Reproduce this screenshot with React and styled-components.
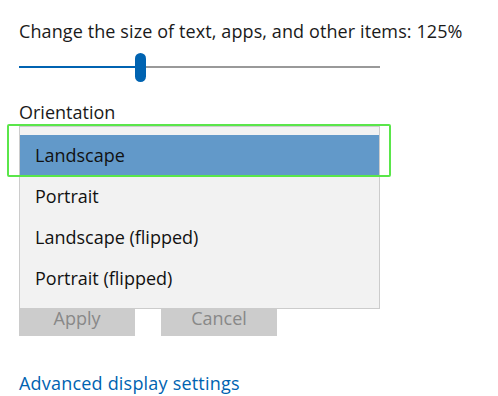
import React from "react";
import styled, { createGlobalStyle } from "styled-components";

const Global = createGlobalStyle`
  html, body { margin: 0; padding: 0; background: #ffffff; }
  body { font-family: "Open Sans", "Noto Sans", sans-serif; color: #1a1a1a; }
`;

const Page = styled.div`
  position: relative;
  width: 498px;
  height: 396px;
  padding-left: 19px;
  box-sizing: border-box;
  overflow: hidden;
`;

const Title = styled.div`
  margin-top: 19px;
  font-size: 18px;
  line-height: 24px;
  letter-spacing: 0.1px;
  color: #1a1a1a;
  white-space: nowrap;
`;

const Slider = styled.div`
  margin-top: 9px;
  width: 361px;
  height: 30px;
  display: flex;
  align-items: center;
`;

const Track = styled.div`
  height: 2px;
  background: ${(p) => (p.$filled ? "#0063b1" : "#999999")};
  flex: ${(p) => (p.$filled ? "0 0 auto" : "1 1 auto")};
`;

const Thumb = styled.div`
  flex: 0 0 auto;
  width: 11px;
  height: 29px;
  border-radius: 6px;
  background: #0063b1;
`;

const Label = styled.div`
  margin-top: 18px;
  font-size: 18px;
  line-height: 24px;
  color: #1a1a1a;
`;

const ComboWrap = styled.div`
  position: relative;
  height: 180px;
`;

const Popup = styled.ul`
  position: absolute;
  top: 2px;
  left: 0;
  width: 361px;
  margin: 0;
  padding: 8px 0 9px;
  list-style: none;
  background: #f2f2f2;
  border: 1px solid #cccccc;
  box-sizing: border-box;
  z-index: 2;
`;

const Option = styled.li`
  height: 41px;
  display: flex;
  align-items: center;
  padding-left: 15px;
  padding-bottom: 2px;
  box-sizing: border-box;
  font-size: 18px;
  color: #111111;
  background: ${(p) => (p.$selected ? "#6299c9" : "transparent")};
`;

const Buttons = styled.div`
  display: flex;
  gap: 26px;
`;

const Button = styled.button`
  width: 116px;
  height: 32px;
  border: none;
  padding: 0 0 4px;
  background: #cccccc;
  color: #888888;
  font-family: inherit;
  font-size: 18px;
`;

const Link = styled.a`
  display: block;
  margin-top: 35px;
  font-size: 18px;
  line-height: 24px;
  letter-spacing: 0.2px;
  color: #0063b1;
  text-decoration: none;
`;

const Highlight = styled.div`
  position: absolute;
  left: 7px;
  top: 124px;
  width: 384px;
  height: 53px;
  border: 2px solid #5ae64a;
  border-radius: 2px;
  box-sizing: border-box;
  z-index: 3;
  pointer-events: none;
`;

const options = ["Landscape", "Portrait", "Landscape (flipped)", "Portrait (flipped)"];

export default function App() {
  return (
    <>
      <Global />
      <Page>
        <Title>Change the size of text, apps, and other items: 125%</Title>
        <Slider>
          <Track $filled style={{ width: 116 }} />
          <Thumb />
          <Track />
        </Slider>
        <Label>Orientation</Label>
        <ComboWrap>
          <Popup>
            {options.map((o, i) => (
              <Option key={o} $selected={i === 0}>{o}</Option>
            ))}
          </Popup>
        </ComboWrap>
        <Buttons>
          <Button>Apply</Button>
          <Button>Cancel</Button>
        </Buttons>
        <Link href="#">Advanced display settings</Link>
        <Highlight />
      </Page>
    </>
  );
}
